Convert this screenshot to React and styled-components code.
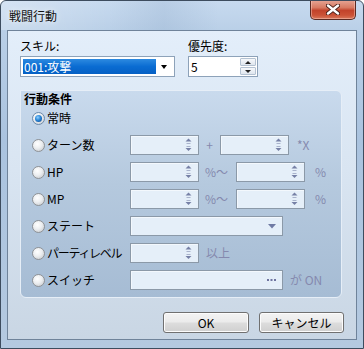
import React from "react";
import styled, { createGlobalStyle } from "styled-components";

const GlobalStyle = createGlobalStyle`
  html, body { margin: 0; padding: 0; background: #ffffff; }
  body {
    font-family: "Noto Sans CJK JP", "Noto Sans", sans-serif;
    font-size: 12px;
    color: #000;
  }
  * { box-sizing: border-box; }
`;

const Window = styled.div`
  width: 364px;
  height: 349px;
  display: flex;
  flex-direction: column;
  border: 1px solid #3d4c5e;
  border-radius: 6px 6px 0 0;
  background: linear-gradient(180deg, #c7daef 0%, #b9cfe7 9%, #aac3df 40%, #b4c9e0 100%);
  overflow: hidden;
`;

const TitleBar = styled.div`
  height: 29px;
  display: flex;
  align-items: flex-start;
  flex-shrink: 0;
  background: linear-gradient(90deg, rgba(255,255,255,0.25) 0%, rgba(255,255,255,0) 30%, rgba(120,150,185,0.18) 45%, rgba(255,255,255,0) 60%);
`;

const Title = styled.div`
  padding: 7px 0 0 8px;
  line-height: 16px;
  font-size: 12px;
  color: #111;
  text-shadow: 0 0 6px rgba(255,255,255,0.9);
`;

const CloseButton = styled.div`
  margin: -1px 7px 0 auto;
  width: 46px;
  height: 20px;
  display: flex;
  align-items: center;
  justify-content: center;
  border: 1px solid #5a2a22;
  border-top: none;
  border-radius: 0 0 5px 5px;
  background: linear-gradient(180deg, #e7a797 0%, #d77a62 40%, #c2432b 55%, #cb5236 80%, #d8785c 100%);
  box-shadow: inset 0 0 0 1px rgba(255,210,200,0.45);
`;

const Client = styled.div`
  flex: 1;
  margin: 0 6px 8px 6px;
  display: flex;
  flex-direction: column;
  padding: 7px 12px 6px 12px;
  border: 1px solid #6f839a;
  background: linear-gradient(180deg, #e3eefa 0%, #d9e5f2 45%, #c9d6e4 100%);
`;

const TopRow = styled.div`
  display: flex;
  align-items: flex-start;
`;

const Field = styled.div`
  display: flex;
  flex-direction: column;
  width: ${(p) => p.$width}px;
  margin-left: ${(p) => p.$offset || 0}px;
`;

const Label = styled.div`
  line-height: 16px;
  height: 16px;
  margin-bottom: 2px;
`;

const Combo = styled.div`
  height: 21px;
  display: flex;
  align-items: center;
  padding: 0 2px;
  border: 1px solid #8da2b9;
  background: #fff;
`;

const Selection = styled.div`
  width: 133px;
  height: 15px;
  line-height: 15px;
  padding-left: 1px;
  color: #fff;
  background: linear-gradient(180deg, #2d8ae0 0%, #0a6cd2 50%, #0660c4 100%);
`;

const ComboArrow = styled.div`
  margin-left: auto;
  margin-right: 5px;
  width: 0;
  height: 0;
  border-left: 3.5px solid transparent;
  border-right: 3.5px solid transparent;
  border-top: 4px solid #000;
`;

const SpinBox = styled.div`
  height: 21px;
  display: flex;
  align-items: stretch;
  border: 1px solid #8da2b9;
  background: #fff;
`;

const SpinValue = styled.div`
  flex: 1;
  line-height: 19px;
  padding-left: 2px;
`;

const SpinButtons = styled.div`
  width: 17px;
  display: flex;
  flex-direction: column;
  gap: 1px;
  padding: 1px 1px 1px 0;
`;

const SpinButton = styled.div`
  flex: 1;
  display: flex;
  align-items: center;
  justify-content: center;
  border: 1px solid #b4c2d2;
  border-radius: 1px;
  background: linear-gradient(180deg, #f6f8fb, #dfe6ee);
`;

const Tri = styled.div`
  width: 0;
  height: 0;
  border-left: 3px solid transparent;
  border-right: 3px solid transparent;
  ${(p) => (p.$up ? "border-bottom: 3px solid #222;" : "border-top: 3px solid #222;")}
`;

const Group = styled.div`
  margin-top: 13px;
  width: 322px;
  height: 208px;
  padding: 1px 0 0 11px;
  display: flex;
  flex-direction: column;
  gap: 7px;
  border: 1px solid #e6eef7;
  border-radius: 0 6px 6px 6px;
  background: linear-gradient(180deg, #c9daed 0%, #b5c9de 45%, #a6bcd4 100%);
`;

const GroupTitle = styled.div`
  margin-left: -8px;
  margin-bottom: -5px;
  line-height: 14px;
  font-weight: bold;
  font-size: 12px;
`;

const Row = styled.div`
  height: 20px;
  display: flex;
  align-items: center;
`;

const Option = styled.label`
  width: 98px;
  flex-shrink: 0;
  display: flex;
  align-items: center;
  gap: 2px;
  line-height: 16px;
  white-space: nowrap;
`;

const OptionText = styled.span`
  letter-spacing: ${(p) => (p.$tight ? "-1.3px" : "0")};
`;

const Radio = styled.span`
  width: 13px;
  height: 13px;
  flex-shrink: 0;
  border-radius: 50%;
  border: 1px solid ${(p) => (p.$checked ? "#6d8bab" : "#8f9296")};
  background: radial-gradient(circle at 40% 35%, #ffffff 0%, #eceef0 45%, #bfc3c8 100%);
  display: flex;
  align-items: center;
  justify-content: center;
  &::after {
    content: "";
    display: ${(p) => (p.$checked ? "block" : "none")};
    width: 7px;
    height: 7px;
    border-radius: 50%;
    background: radial-gradient(circle at 40% 35%, #8fd0ff 0%, #2a86d6 45%, #0b3f86 100%);
  }
`;

const Input = styled.div`
  width: ${(p) => p.$width}px;
  height: 20px;
  flex-shrink: 0;
  display: flex;
  align-items: center;
  justify-content: flex-end;
  padding-right: 6px;
  margin-left: ${(p) => p.$offset || 0}px;
  border: 1px solid #8b99a8;
  background: #e5eff9;
  box-shadow: inset 1px 1px 0 #f3f8fd;
`;

const Sep = styled.div`
  width: ${(p) => (p.$width ? `${p.$width}px` : "auto")};
  flex-shrink: 0;
  margin-left: ${(p) => p.$offset || 0}px;
  text-align: ${(p) => p.$align || "left"};
  color: #8589ae;
  line-height: 16px;
  white-space: nowrap;
`;

const ButtonRow = styled.div`
  margin-top: 14px;
  display: flex;
  justify-content: flex-end;
  gap: 10px;
`;

const Button = styled.div`
  width: ${(p) => p.$width}px;
  height: 21px;
  display: flex;
  align-items: center;
  justify-content: center;
  border: 1px solid #707070;
  border-radius: 3px;
  background: linear-gradient(180deg, #f3f3f3 0%, #ebebeb 48%, #dddddd 52%, #cfcfcf 100%);
  box-shadow: inset 0 0 0 1px #fcfcfc;
  line-height: 16px;
`;

const SpinArrows = () => (
  <svg width="7" height="14" viewBox="0 0 7 14">
    <polygon points="3.5,0.5 6.5,3.5 0.5,3.5" fill="#7680a6" />
    <rect x="1.5" y="5" width="4" height="1" fill="#a9b3cc" />
    <rect x="1.5" y="8" width="4" height="1" fill="#a9b3cc" />
    <polygon points="0.5,10 6.5,10 3.5,13" fill="#7680a6" />
  </svg>
);

const DropArrow = () => (
  <svg width="8" height="5" viewBox="0 0 8 5">
    <polygon points="0,0 8,0 4,4.5" fill="#6f7aa4" />
  </svg>
);

const Ellipsis = () => (
  <svg width="9" height="4" viewBox="0 0 9 4">
    <rect x="0" y="1" width="2" height="2" fill="#6f74a0" />
    <rect x="3.5" y="1" width="2" height="2" fill="#6f74a0" />
    <rect x="7" y="1" width="2" height="2" fill="#6f74a0" />
  </svg>
);

const CloseIcon = () => (
  <svg width="14" height="11" viewBox="0 0 14 11">
    <path d="M2 1.5 L12 9.5 M12 1.5 L2 9.5" stroke="#4a2018" strokeWidth="4.2" strokeLinecap="round" />
    <path d="M2 1.5 L12 9.5 M12 1.5 L2 9.5" stroke="#ffffff" strokeWidth="2.4" strokeLinecap="round" />
  </svg>
);

const conditions = [
  { label: "ターン数", kind: "turn" },
  { label: "HP", kind: "range" },
  { label: "MP", kind: "range" },
  { label: "ステート", kind: "state" },
  { label: "パーティレベル", kind: "level", tight: true },
  { label: "スイッチ", kind: "switch" },
];

function ConditionRow({ label, kind, tight }) {
  return (
    <Row>
      <Option>
        <Radio />
        <OptionText $tight={tight}>{label}</OptionText>
      </Option>
      {kind === "turn" && (
        <>
          <Input $width={69}><SpinArrows /></Input>
          <Sep $width={21} $align="center">+</Sep>
          <Input $width={69}><SpinArrows /></Input>
          <Sep $offset={8}>*X</Sep>
        </>
      )}
      {kind === "range" && (
        <>
          <Input $width={69}><SpinArrows /></Input>
          <Sep $width={31} $offset={6}>%～</Sep>
          <Input $width={69}><SpinArrows /></Input>
          <Sep $offset={10}>%</Sep>
        </>
      )}
      {kind === "state" && (
        <Input $width={153}><DropArrow /></Input>
      )}
      {kind === "level" && (
        <>
          <Input $width={69}><SpinArrows /></Input>
          <Sep $offset={7}>以上</Sep>
        </>
      )}
      {kind === "switch" && (
        <>
          <Input $width={153}><Ellipsis /></Input>
          <Sep $offset={7}>が ON</Sep>
        </>
      )}
    </Row>
  );
}

export default function App() {
  return (
    <>
      <GlobalStyle />
      <Window>
        <TitleBar>
          <Title>戦闘行動</Title>
          <CloseButton>
            <CloseIcon />
          </CloseButton>
        </TitleBar>
        <Client>
          <TopRow>
            <Field $width={155}>
              <Label>スキル:</Label>
              <Combo>
                <Selection>001:攻撃</Selection>
                <ComboArrow />
              </Combo>
            </Field>
            <Field $width={70} $offset={13}>
              <Label>優先度:</Label>
              <SpinBox>
                <SpinValue>5</SpinValue>
                <SpinButtons>
                  <SpinButton><Tri $up /></SpinButton>
                  <SpinButton><Tri /></SpinButton>
                </SpinButtons>
              </SpinBox>
            </Field>
          </TopRow>
          <Group>
            <GroupTitle>行動条件</GroupTitle>
            <Row>
              <Option>
                <Radio $checked />
                <OptionText>常時</OptionText>
              </Option>
            </Row>
            {conditions.map((c) => (
              <ConditionRow key={c.label} {...c} />
            ))}
          </Group>
          <ButtonRow>
            <Button $width={86}>OK</Button>
            <Button $width={85}>キャンセル</Button>
          </ButtonRow>
        </Client>
      </Window>
    </>
  );
}
